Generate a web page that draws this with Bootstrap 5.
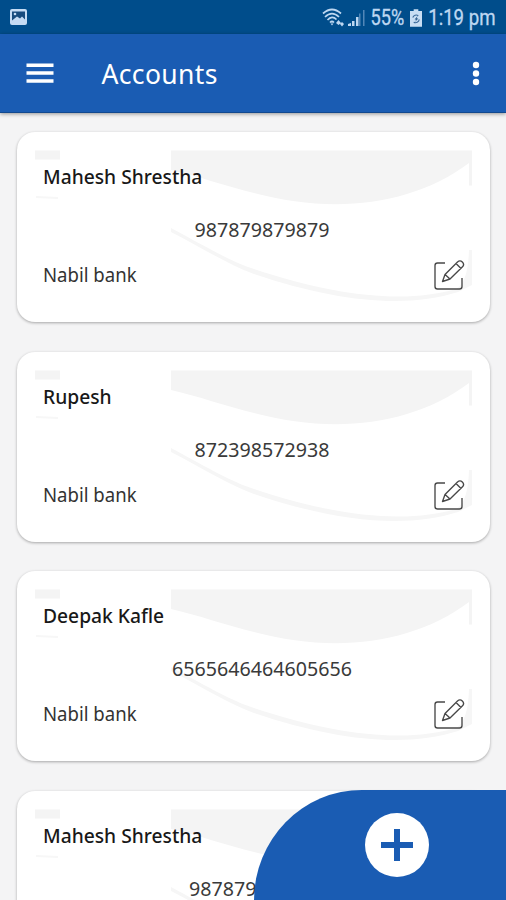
<!DOCTYPE html>
<html lang="en">
<head>
<meta charset="utf-8">
<meta name="viewport" content="width=device-width, initial-scale=1">
<title>Accounts</title>
<link href="https://cdn.jsdelivr.net/npm/bootstrap@5.3.0/dist/css/bootstrap.min.css" rel="stylesheet">
<style>
body{background:#f4f4f5;font-family:"Noto Sans",sans-serif;height:900px;color:#222}
.status{height:34px;background:#004d8b;color:#bdd7f1;font:400 19.5px/34px Roboto,sans-serif;padding:0 11px 0 9px}
.condensed{display:inline-block;transform-origin:right center;white-space:nowrap;-webkit-text-stroke:.3px #bdd7f1}
.signal{margin-right:2px}
.percent{transform:translateY(1.2px) scale(.93,1.1)}
.clock{transform:translateY(1.2px) scale(.955,1.1)}
.battery{margin:1px 3px 0 5px}
.appbar{height:79px;background:#1a5cb3;border-bottom:1px solid #12498f;box-shadow:0 1px 4px rgba(0,0,0,.4);color:#fff;padding:0 24px 0 26px}
.title{font-size:26.5px;line-height:36px;margin-left:47.5px;padding-top:2px;letter-spacing:.35px}
.accounts{padding:19px 16px 0 17px;gap:29.5px;min-height:0}
.account{height:190px;flex:none;border:0;border-radius:18px;box-shadow:0 1px 3px rgba(0,0,0,.32);padding:32px 25px 0 26px}
.account-art{left:0;top:0;width:473px;height:190px}
.holder{font-size:20.5px;line-height:26px;font-weight:500;color:#181818;transform:translateY(-1px) scaleX(.938);transform-origin:left center}
.number{font-size:19.65px;line-height:26px;margin-top:27px;padding-left:16px;color:#3a3a3a}
.bank{font-size:19.5px;line-height:26px;color:#333;display:inline-block;transform:translateY(-.5px) scaleX(.952);transform-origin:left center}
.bottom-line{margin-top:15px;height:34px}
.add-panel{width:252px;height:110px;background:#1a5cb3;border-top-left-radius:108px 110px;padding:23px 0 0 111px}
</style>
<script src="https://cdn.jsdelivr.net/npm/bootstrap@5.3.0/dist/js/bootstrap.bundle.min.js"></script>
</head>
<body class="position-relative overflow-hidden d-flex flex-column">
<svg class="d-none">
  <symbol id="art" viewBox="0 0 473 190">
    <path fill="#f4f4f4" d="M18 18.500h25v9H18zM154 18.500h301v35h-3V31C395 74 315 82 237 61C208 54 181 44 154 38z"/>
    <path fill="none" stroke="#f7f7f7" stroke-width="2" d="M19 65l22 1"/>
    <path fill="#f6f6f6" d="M154 96C193 117 215 130 237 137C324 166 391 171 439 157Q451 151 452 118h3v35Q449 156 441 160C390 176 323 171 237 142C212 133 187 117 154 100z"/>
  </symbol>
  <symbol id="edit" viewBox="0 0 32 32">
    <g fill="none" stroke="#484848" stroke-width="1.35" stroke-linejoin="round">
      <path d="M12 4H4.500Q2 4 2 6.500V27.500Q2 30 4.500 30H26.500Q29 30 29 27.500V19"/>
      <path d="M9.500 22.500L12 15.500L24.500 3Q27 .8 29.300 3Q31.800 5.500 29.500 7.800L17 20zM12 15.500L17 20M23 4.500l5 5M10 21l2 1"/>
    </g>
  </symbol>
</svg>

<div class="status d-flex align-items-center justify-content-between flex-shrink-0">
  <svg width="19" height="17" viewBox="0 0 19 17"><rect x="1" y="0" width="17" height="16" rx="2" fill="#c5dbf4"/><path fill="#174b7e" d="M3 2.500h13v8l-3-3-2 2-3-2-5 4z"/><circle cx="6" cy="5" r="1.300" fill="#c5dbf4"/></svg>
  <div class="d-flex align-items-center">
    <svg class="signal" width="44" height="22" viewBox="0 0 44 22">
      <g fill="none" stroke="#bdd7f1" stroke-width="1.700"><path d="M1 7.500Q10 -.5 19 7.500M3 11Q10 4 17 11M5.500 14Q10 9 14.500 13.500M8 16.500Q10 14.500 12 16.500"/></g>
      <path fill="#bdd7f1" d="M8.500 17.500h3L10 19.500zM14 17l2.500-3 2.500 3-2.500 2zM18 18l2-2 2 2-2 2.500zM26 20v-2l3-1v3zM30 20v-5h2.500v5zM34 20v-9h2.500v9z"/>
      <path fill="#5287b8" d="M37 7.500h1.500V20H37zM41 4h1.500v16H41z"/>
    </svg>
    <span class="condensed percent">55%</span>
    <svg class="battery" width="12" height="18" viewBox="0 0 13 19"><path fill="#c8def4" d="M4 0h5v2h4v17H0V2h4z"/><path fill="none" stroke="#3c6b9b" stroke-width="1.200" d="M3 9a4 4 0 0 1 6-2M10 11a4 4 0 0 1-6 3"/><path fill="#174b7e" d="M8.500 7L5 11h2l-2 3 4-4H7z"/></svg>
    <span class="condensed clock">1:19 pm</span>
  </div>
</div>

<header class="appbar d-flex align-items-center flex-shrink-0 position-relative">
  <svg width="28" height="22" viewBox="0 0 28 22"><path fill="#fff" d="M.5 1.500h27V5H.5zM.5 9.300h27v3.500H.5zM.5 17.300h27v3.500H.5z"/></svg>
  <h1 class="title fw-normal mb-0">Accounts</h1>
  <svg class="ms-auto" width="12" height="26" viewBox="0 0 12 26"><g fill="#fff"><circle cx="6" cy="5" r="3.200"/><circle cx="6" cy="13.500" r="3.200"/><circle cx="6" cy="22" r="3.200"/></g></svg>
</header>

<main class="accounts d-flex flex-column flex-grow-1 overflow-hidden">
  <section class="account card">
    <svg class="account-art position-absolute"><use href="#art"/></svg>
    <div class="holder position-relative">Mahesh Shrestha</div>
    <div class="number position-relative text-center">987879879879</div>
    <div class="bottom-line position-relative d-flex align-items-center justify-content-between"><span class="bank">Nabil bank</span><svg width="32" height="32"><use href="#edit"/></svg></div>
  </section>
  <section class="account card">
    <svg class="account-art position-absolute"><use href="#art"/></svg>
    <div class="holder position-relative">Rupesh</div>
    <div class="number position-relative text-center">872398572938</div>
    <div class="bottom-line position-relative d-flex align-items-center justify-content-between"><span class="bank">Nabil bank</span><svg width="32" height="32"><use href="#edit"/></svg></div>
  </section>
  <section class="account card">
    <svg class="account-art position-absolute"><use href="#art"/></svg>
    <div class="holder position-relative">Deepak Kafle</div>
    <div class="number position-relative text-center">6565646464605656</div>
    <div class="bottom-line position-relative d-flex align-items-center justify-content-between"><span class="bank">Nabil bank</span><svg width="32" height="32"><use href="#edit"/></svg></div>
  </section>
  <section class="account card">
    <svg class="account-art position-absolute"><use href="#art"/></svg>
    <div class="holder position-relative">Mahesh Shrestha</div>
    <div class="number position-relative text-center">9878798798798</div>
  </section>
</main>

<div class="add-panel position-absolute bottom-0 end-0">
  <svg width="64" height="64" viewBox="0 0 64 64"><circle cx="32" cy="32" r="32" fill="#fff"/><path fill="#1a5cb3" d="M29 16h6v13h13v6H35v13h-6V35H16v-6h13z"/></svg>
</div>
</body>
</html>
